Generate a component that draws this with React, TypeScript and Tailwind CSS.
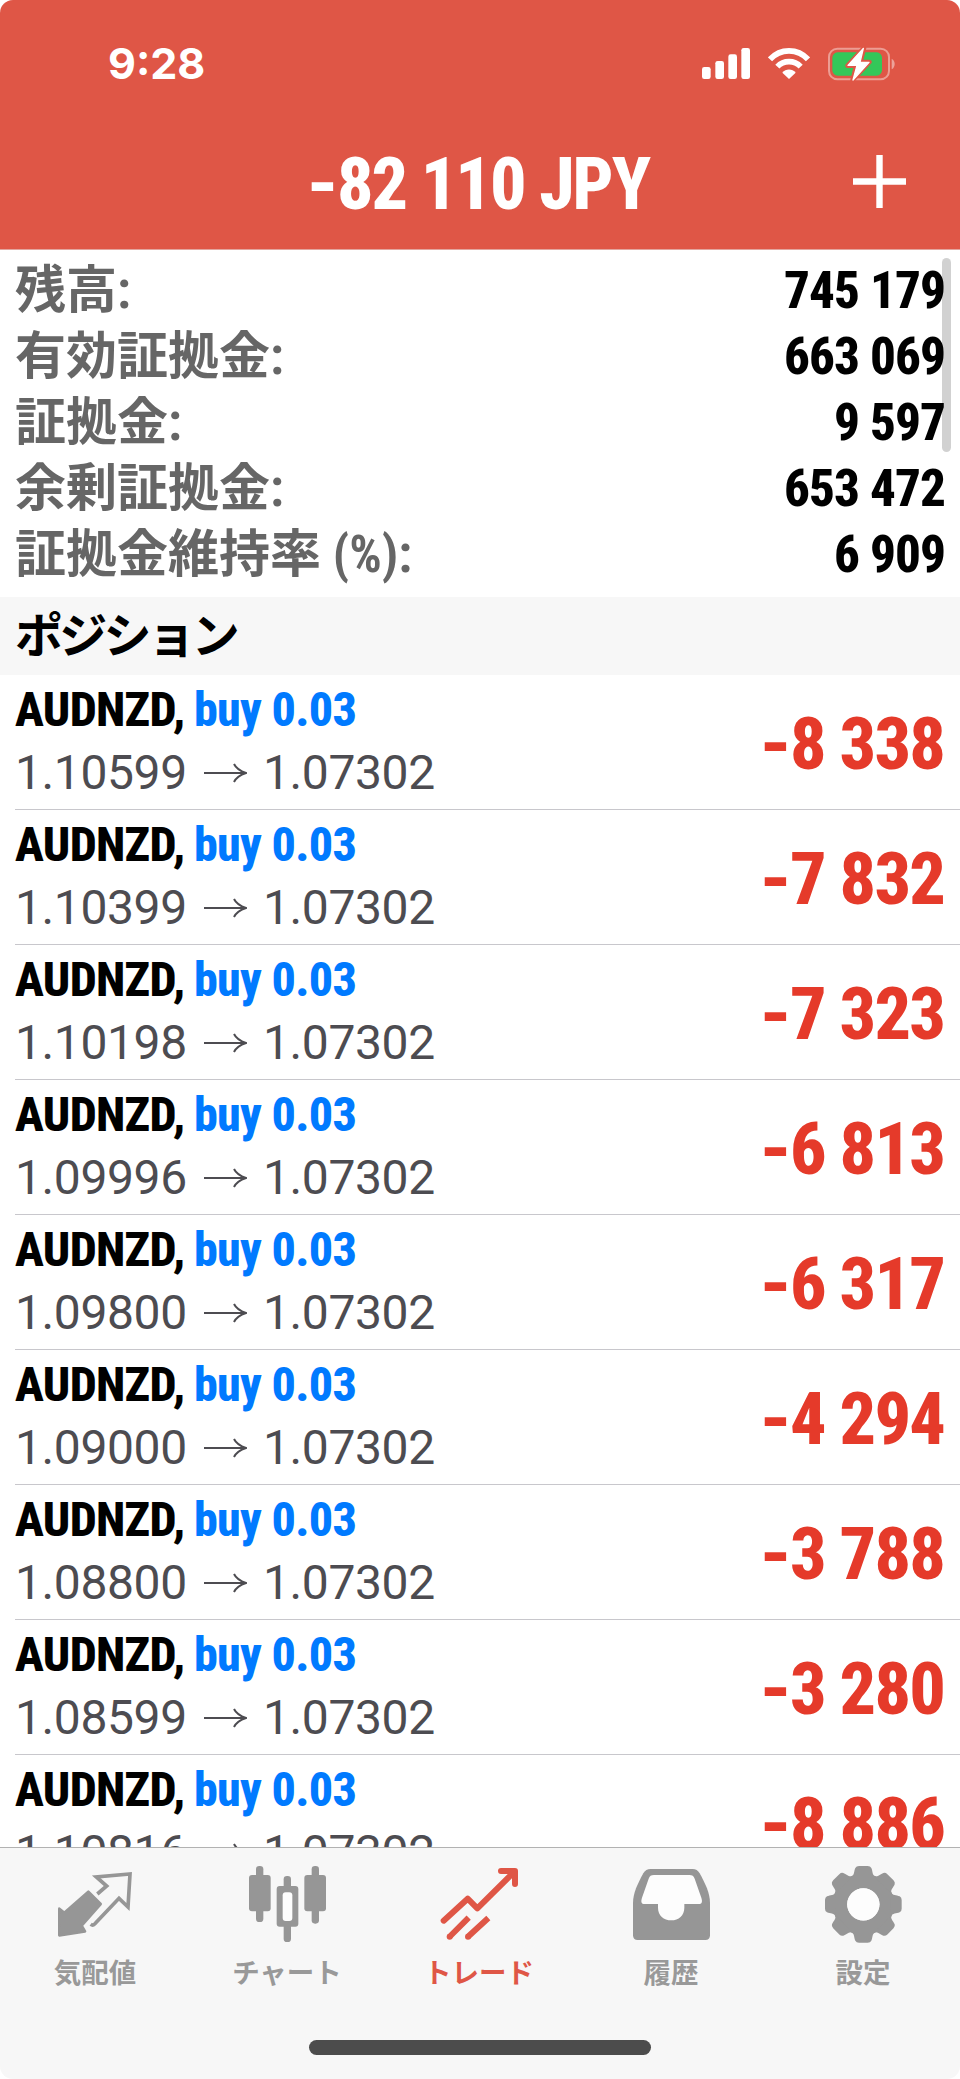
import React from "react";

const summary = [
  { label: "残高:", value: "745 179" },
  { label: "有効証拠金:", value: "663 069" },
  { label: "証拠金:", value: "9 597" },
  { label: "余剰証拠金:", value: "653 472" },
  { label: "証拠金維持率 (%):", value: "6 909" },
];

const positions = [
  { open: "1.10599", profit: "8 338" },
  { open: "1.10399", profit: "7 832" },
  { open: "1.10198", profit: "7 323" },
  { open: "1.09996", profit: "6 813" },
  { open: "1.09800", profit: "6 317" },
  { open: "1.09000", profit: "4 294" },
  { open: "1.08800", profit: "3 788" },
  { open: "1.08599", profit: "3 280" },
  { open: "1.10816", profit: "8 886" },
];

const CURRENT = "1.07302";

function Minus() {
  return <span className="inline-block origin-right scale-x-[1.2]">-</span>;
}

function StatusIcons() {
  return (
    <div className="flex items-start">
      {/* Signal */}
      <svg className="w-12 h-[31px]" viewBox="0 0 144 93" fill="#fff">
        <rect x="0" y="57" width="26" height="36" rx="7" />
        <rect x="40" y="39" width="26" height="54" rx="7" />
        <rect x="79" y="19" width="26" height="74" rx="7" />
        <rect x="118" y="0" width="26" height="93" rx="7" />
      </svg>
      {/* Wifi */}
      <svg className="ml-[18px] w-[42px] h-[31px]" viewBox="-1 0 126 93" fill="none" stroke="#fff" strokeWidth="17">
        <path d="M5 34C36 0 88 0 119 34" />
        <path d="M27 56C46 36 78 36 97 56" />
        <path d="M42 74C52 61 72 61 82 74L62 93Z" fill="#fff" stroke="none" />
      </svg>
      {/* Battery */}
      <svg className="ml-[18px] -mt-px w-[67px] h-[34px]" viewBox="0 0 201 102">
        <rect x="3" y="5" width="180" height="92" rx="25" fill="none" stroke="#fff" strokeOpacity="0.42" strokeWidth="6" />
        <path d="M191 35C203 41 203 61 191 67Z" fill="#fff" fillOpacity="0.45" />
        <rect x="13" y="16" width="149" height="70" rx="16" fill="#34c759" />
        <path d="M108 3L59 56H85L74 99L124 45H97Z" fill="#fff" stroke="#df5646" strokeWidth="14" strokeLinejoin="round" />
        <path d="M106 4L60 55H87L75 99L123 46H96Z" fill="#fff" stroke="#fff" strokeWidth="4" strokeLinejoin="round" />
      </svg>
    </div>
  );
}

function QuotesIcon() {
  return (
    <svg className="w-[84px] h-[81px]" viewBox="0 0 252 243">
      <path
        d="M103 86L140 123L83 188L93 205L16 217V137L31 149Z"
        fill="#969696"
        stroke="#969696"
        strokeWidth="8"
        strokeLinejoin="round"
      />
      <path d="M130 93L158 69L127 42L228 33L222 132L195 106L122 183C118 187 114 187 110 184" fill="none" stroke="#969696" strokeWidth="11" />
    </svg>
  );
}

function ChartIcon() {
  return (
    <svg className="w-[84px] h-[81px]" viewBox="0 0 252 243" fill="#969696">
      <rect x="30" y="9" width="22" height="168" rx="10" />
      <rect x="9" y="36" width="65" height="109" rx="9" />
      <rect x="113" y="39" width="22" height="198" rx="10" />
      <rect x="92" y="69" width="65" height="122" rx="9" />
      <rect x="110" y="88" width="29" height="86" rx="9" fill="#fdfdfd" />
      <rect x="197" y="9" width="22" height="173" rx="10" />
      <rect x="175" y="36" width="65" height="109" rx="9" />
    </svg>
  );
}

function TradeIcon() {
  return (
    <svg className="w-[84px] h-[81px]" viewBox="0 0 252 243" fill="none" stroke="#df5646" strokeWidth="18">
      <path d="M17 173L89 107L118 136L229 26M189 24H231V63" strokeLinecap="round" strokeLinejoin="round" />
      <path d="M34 222L92 164M89 222L151 165" />
      <circle cx="35" cy="221" r="9" fill="#df5646" stroke="none" />
      <circle cx="90" cy="221" r="9" fill="#df5646" stroke="none" />
    </svg>
  );
}

function HistoryIcon() {
  return (
    <svg className="w-[84px] h-[81px]" viewBox="0 0 252 243">
      <path
        d="M62 18H188C197 18 204 22 209 31C226 62 240 91 240 120V217Q240 231 226 231H23Q9 231 9 217V120C9 91 23 62 40 31C45 22 52 18 62 18Z"
        fill="#969696"
      />
      <path
        d="M72 36H178C187 36 191 39 194 47L214 104C218 116 216 123 206 123H163V134C163 158 146 172 124 172C101 172 84 158 84 134V123H44C34 123 32 116 36 104L56 47C59 39 63 36 72 36Z"
        fill="#fdfdfd"
      />
    </svg>
  );
}

function SettingsIcon() {
  return (
    <svg className="w-[84px] h-[81px]" viewBox="0 0 252 243" fill="#969696">
      <g transform="translate(124 124)">
        <circle r="70" fill="none" stroke="#969696" strokeWidth="43" />
        <circle r="48.5" fill="#fdfdfd" />
        {[0, 45, 90, 135, 180, 225, 270, 315].map((angle) => (
          <path
            key={angle}
            transform={`rotate(${angle})`}
            d="M-38 -82C-25 -88 -29 -99 -24 -109Q-21 -115 -13 -115H13Q21 -115 24 -109C29 -99 25 -88 38 -82Z"
          />
        ))}
      </g>
    </svg>
  );
}

const tabs = [
  { label: "気配値", icon: <QuotesIcon /> },
  { label: "チャート", icon: <ChartIcon /> },
  { label: "トレード", icon: <TradeIcon />, active: true },
  { label: "履歴", icon: <HistoryIcon /> },
  { label: "設定", icon: <SettingsIcon /> },
];

export default function App() {
  return (
    <div className="w-[960px] h-[2079px] flex flex-col overflow-hidden rounded-[13px] bg-white font-['Roboto_Condensed','Noto_Sans_CJK_JP',sans-serif] font-bold">
      {/* Header */}
      <header className="h-[250px] shrink-0 bg-[#df5646] border-b border-[#e3a59e] text-white">
        <div className="h-[140px] flex items-start justify-between pt-12 pl-[108px] pr-[65px]">
          <span className="font-['Inter',sans-serif] text-[43px] leading-[31px]">9:28</span>
          <StatusIcons />
        </div>
        <div className="h-[88px] grid grid-cols-[1fr_auto_1fr] items-center pr-[54px]">
          <h1 className="col-start-2 ml-[54px] text-[72px] leading-[90px] font-extrabold tracking-[-2px] whitespace-nowrap">
            <Minus />82 110 JPY
          </h1>
          <svg className="w-[53px] h-[53px] mb-[7px] justify-self-end" viewBox="0 0 53 53" stroke="#fff" strokeWidth="6.4">
            <path d="M0 26.5H53M26.5 0V53" />
          </svg>
        </div>
      </header>

      {/* Account summary */}
      <section className="relative h-[347px] shrink-0 pt-2 px-[15px] text-[51px] leading-[66px]">
        {summary.map((row) => (
          <div key={row.label} className="flex justify-between">
            <span className="text-[#666]">{row.label}</span>
            <span className="font-extrabold tracking-[-0.9px] text-black">{row.value}</span>
          </div>
        ))}
        <div className="absolute top-2 right-[9px] w-[9px] h-[194px] rounded-full bg-black/[0.18]" />
      </section>

      <h2 className="h-[78px] shrink-0 bg-[#f7f7f7] pl-[15px] font-['Noto_Sans_CJK_JP',sans-serif] text-[48px] leading-[70px] tracking-[-3.8px] text-black">
        ポジション
      </h2>

      {/* Positions */}
      <ul className="h-[1172px] shrink-0 overflow-hidden pl-[15px]">
        {positions.map((p) => (
          <li key={p.open} className="h-[135px] flex justify-between border-b border-[#c8c7cc] pr-[15px]">
            <div className="pt-[5px] text-[48px] leading-[60px]">
              <p className="font-extrabold tracking-[-0.7px] text-black whitespace-nowrap">
                AUDNZD, <span className="-ml-px text-[#007aff]">buy 0.03</span>
              </p>
              <p className="mt-[3px] flex items-center tracking-[-0.4px] font-['Roboto',sans-serif] font-normal text-[#4d4c51]">
                <span className="w-[189px]">{p.open}</span>
                <svg className="w-[43px] h-5 mr-4" viewBox="0 0 43 20" fill="none" stroke="#4d4c51" strokeWidth="2">
                  <path d="M0 10H42M30 1Q33 7 42 10Q33 13 30 19" />
                </svg>
                <span>{CURRENT}</span>
              </p>
            </div>
            <span className="mr-px h-[134px] text-[72px] leading-[140px] font-extrabold tracking-[-1.8px] text-[#e53a2a]">
              <Minus />{p.profit}
            </span>
          </li>
        ))}
      </ul>

      {/* Tab bar */}
      <nav className="h-[232px] shrink-0 bg-[#f7f7f7] border-t border-[#b2b2b2]">
        <div className="grid grid-cols-5 pt-[15px]">
          {tabs.map((tab) => (
            <div key={tab.label} className="flex flex-col items-center">
              {tab.icon}
              <span
                className={`mt-[9px] mr-0.5 font-['Noto_Sans_CJK_JP',sans-serif] text-[27.5px] leading-9 ${
                  tab.active ? "text-[#df5646]" : "text-[#999]"
                }`}
              >
                {tab.label}
              </span>
            </div>
          ))}
        </div>
        <div className="mx-auto mt-[51px] w-[342px] h-[15px] rounded-full bg-[#4c4c4c]" />
      </nav>
    </div>
  );
}
